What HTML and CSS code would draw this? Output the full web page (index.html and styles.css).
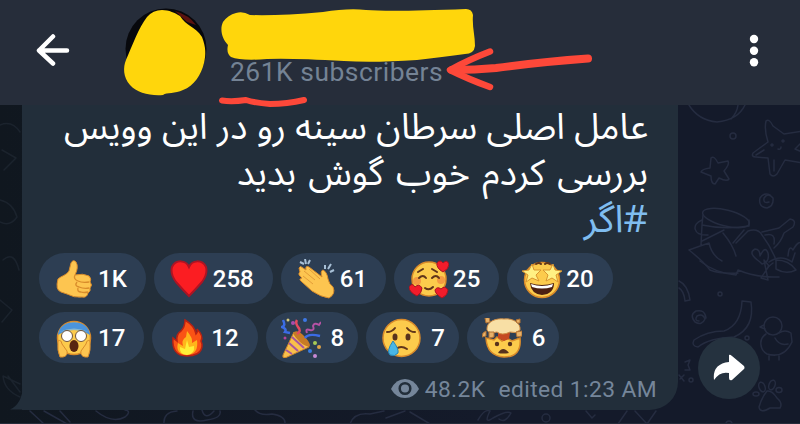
FILE: index.html
```html
<!DOCTYPE html>
<html lang="en">
<head>
    <meta charset="UTF-8">
    <meta name="viewport" content="width=device-width, initial-scale=1.0">
    <title>Channel</title>
    <link rel="stylesheet" href="styles.css">
</head>
<body>
    <div class="screen">
        <header class="topbar">
            <svg class="back" viewBox="0 0 34 32"><path d="M31 16.500H3M17 2.500L3 16.500L17 29.500"/></svg>
            <svg class="avatar" viewBox="0 0 86 92">
                <circle class="photo" cx="43" cy="42" r="40.500"/>
                <path class="photo-red" d="M52 4Q66 8 73 18L64 15Z"/>
                <path class="paint" d="M39 3C46 3 52 6 57 9C63 19 72 19 79 30C83 40 83 48 81 56C78 68 71 79 60 83C52 87 44 85 40 88C27 89 14 86 7 78C0 70 0 60 3 53C9 39 16 20 24 10Q30 3 39 3Z"/>
            </svg>
            <div class="channel">
                <svg class="name" viewBox="0 0 256 56">
                    <path class="paint" d="M15 5Q22 3 29 7Q57 8 102 4Q127 0 145 2Q170 4 245 1Q251 1 252 7C251 19 254 27 254 38Q253 46 244 46Q222 49 196 52Q151 55 123 53Q70 50 46 51Q20 53 10 49Q5 45 7 37C0 30-1 20 2 14Q7 7 15 5Z"/>
                </svg>
                <div class="subs">261K subscribers</div>
            </div>
            <svg class="more" viewBox="0 0 10 34"><circle cx="5" cy="5" r="4.200"/><circle cx="5" cy="16.700" r="4.200"/><circle cx="5" cy="28.300" r="4.200"/></svg>
        </header>

        <main class="chat">
            <svg class="doodles" viewBox="0 105 800 319">
                <!-- right side -->
                <path d="M689 105Q698 120 717 122Q738 120 745 105M738 105Q737 113 731 119"/>
                <circle cx="733" cy="136" r="3"/>
                <path d="M766 121Q769 118 773 126L784 134L803 131M766 121Q764 130 768 142L753 153Q751 157 756 157L768 158L770 174Q773 178 777 174L785 160L803 163M774 160V171M803 141L795 149L802 152M756 155L764 150M778 149Q781 150 781 147"/>
                <circle cx="772" cy="145" r="1"/><circle cx="783" cy="141" r="1"/>
                <path d="M711 158Q714 155 718 163L728 161Q730 164 724 171L729 179Q727 182 719 178L715 184Q711 184 711 176L701 172Q702 169 710 168Z"/>
                <path d="M769 202Q763 204 764 198Q768 192 773 198Q774 206 767 208Q758 207 760 198Q764 192 770 195"/>
                <ellipse cx="726" cy="218" rx="24" ry="8" transform="rotate(14 726 218)"/>
                <path d="M703 215L702 225Q725 230 749 226V220M702 220C691 224 693 236 708 235M702 225L701 245M724 230L702 241M744 230L733 243M689 250Q700 246 709 243Q712 256 722 261M723 233Q733 245 736 256M689 250Q704 262 710 270Q720 274 738 273M736 243L748 231Q758 228 762 235Q771 247 776 260M762 232L779 228L790 219Q797 220 793 227L784 233Q781 242 774 248M765 235Q776 232 774 244"/>
                <path d="M760 262Q747 253 755 249Q760 249 760 256Q765 245 768 253Q770 262 762 264ZM769 262Q781 254 792 262M773 263L768 267M788 256Q789 244 793 250Q799 239 803 244M795 253L792 262"/>
                <path d="M700 261Q715 273 736 275L738 270Q757 278 779 277M776 260Q789 260 796 270Q786 275 776 269ZM764 260L769 266L761 278L768 280Z"/>
                <path d="M679 281Q688 285 690 300L685 301Q684 291 679 288"/>
                <circle cx="720" cy="294" r="2"/><circle cx="747" cy="338" r="2"/>
                <path d="M699 321Q694 321 697 316Q703 313 705 319Q702 326 695 322Q689 315 696 311Q705 309 706 318"/>
                <path d="M742 301L751 302Q755 328 734 337Q709 338 698 347Q691 346 694 340Q707 331 724 331Q741 325 742 301Z"/>
                <circle cx="773" cy="326" r="9"/>
                <path d="M764 325L760 327L765 329M766 334C758 339 760 350 767 354Q784 359 792 342L791 333Q785 329 779 333M775 338Q779 346 788 344M769 356V360M779 356V360"/>
                <path d="M767 391Q772 390 777 398Q783 403 780 408L770 408Q760 414 759 407Q762 397 767 391Z"/>
                <ellipse cx="756" cy="394" rx="3" ry="2"/><ellipse cx="762" cy="387" rx="3" ry="5" transform="rotate(-20 762 387)"/><ellipse cx="772" cy="385" rx="3" ry="5" transform="rotate(20 772 385)"/><ellipse cx="779" cy="390" rx="3" ry="2.500"/>
                <path d="M685 362L690 360L688 365L690 370L685 370M679 375L684 381M684 375L680 379"/><circle cx="691" cy="380" r="2"/>
                <!-- left edge -->
                <g class="faint">
                    <path d="M0 125Q12 120 20 132M2 150L16 158L4 170M0 200Q13 203 17 217Q10 227 0 222M3 260Q14 250 19 270M0 300L12 310L2 322M3 376L20 384M3 376Q4 390 20 397M8 376L20 392"/>
                </g>
                <!-- under the bubble -->
                <path d="M30 411L44 424M44 411L67 424M60 411L70 422M96 411Q112 424 125 417Q132 411 125 410M164 424Q163 412 177 411M193 411Q190 424 207 420Q222 418 220 411M202 410Q205 421 214 411M255 410Q260 416 272 414Q286 416 285 424M350 424Q354 412 370 414L384 411M386 418L405 411M430 424L410 412M478 420Q485 408 490 411Q483 425 493 418Q507 410 511 413Q505 424 499 419M586 411L592 418L595 415M618 424L627 411M635 411L647 424L656 411"/>
                <circle cx="546" cy="418" r="4"/><circle cx="729" cy="424" r="3"/>
            </svg>

            <article class="bubble">
                <p class="message" dir="rtl" lang="fa">
                    <span class="line">عامل اصلی سرطان سینه رو در این وویس</span>
                    <span class="line loose">بررسی کردم خوب گوش بدید</span>
                    <span class="line hashtag">#اگر</span>
                </p>

                <div class="reactions">
                    <div class="row">
                        <div class="chip">
                            <svg viewBox="0 0 40 40"><path class="skin" d="M4 20C7 17 13 16 15 12L17 4Q19 0 22 3Q25 8 21 16Q29 14 35 17Q38 20 36 23Q39 26 36 29Q37 32 34 34Q33 39 28 38Q20 39 13 35L7 33Q1 31 4 20Z"/><path class="skin-line" d="M21 16Q19 20 24 22M24 22Q28 24 35 23M23 23Q20 27 25 28Q30 30 35 29M24 29Q23 33 27 33Q30 34 34 33"/></svg>
                            <span>1K</span>
                        </div>
                        <div class="chip">
                            <svg viewBox="0 0 40 40"><path d="M20 37Q14 31 7 23Q1 15 3 8C7 0 17 1 20 8C23 1 33 0 37 8Q39 15 33 23Q26 31 20 37Z" fill="#fb1d22" stroke="#ad1423" stroke-width="2"/></svg>
                            <span>258</span>
                        </div>
                        <div class="chip">
                            <svg viewBox="0 0 40 40"><path class="skin" d="M3 9Q4 6 7 9L10 11Q9 6 13 8L26 18Q24 12 27 11Q31 13 32 20Q33 25 37 28Q40 35 33 39Q25 38 16 32L6 23Q2 20 6 19Q1 15 4 13Z"/><path class="skin-line thin" d="M8 12L19 21M7 17L17 25M13 10L24 20"/><path d="M4 3L8 5M9 0L10 5M14 1L12 5M29 6L29 10M35 5L32 10M38 11L34 13" stroke="#a8c0d6" stroke-width="2" fill="none"/></svg>
                            <span>61</span>
                        </div>
                        <div class="chip">
                            <svg viewBox="0 0 40 40"><circle class="face" cx="20" cy="20" r="17"/><circle cx="8" cy="22" r="4" fill="#f49b42"/><circle cx="32" cy="21" r="4" fill="#f49b42"/><path class="feature" d="M9 13L14 10M23 10L28 13M10 19Q14 15 17 19M23 19Q27 15 30 19M16 29Q20 32 24 28"/><path class="heart" d="M34 13Q27 9 28 4Q31 0 34 4Q38 0 40 5Q40 10 34 13Z"/><path class="heart" d="M8 37Q0 33 0 28Q3 23 6 28Q10 24 13 29Q13 34 8 37Z"/><path class="heart" d="M33 39Q26 35 26 31Q28 27 32 30Q36 26 39 31Q39 36 33 39Z"/></svg>
                            <span>25</span>
                        </div>
                        <div class="chip">
                            <svg viewBox="0 0 40 40"><circle class="face" cx="20" cy="21" r="17.500"/><path d="M8 24Q20 28 32 24Q32 35 20 36Q9 35 8 24Z" fill="#4c2012"/><path d="M9 25Q20 29 31 25L30 28Q20 31 10 28Z" fill="#fff"/><path class="feature" d="M14 5Q17 3 19 5M23 5Q25 3 28 5"/><path class="star" d="M10 5L12 11L19 11L14 16L17 22L10 19L4 23L6 16L0 12L7 11Z"/><path class="star" d="M31 5L33 11L40 12L34 16L36 23L30 19L24 22L26 16L21 11L28 11Z"/></svg>
                            <span>20</span>
                        </div>
                    </div>
                    <div class="row">
                        <div class="chip">
                            <svg viewBox="0 0 40 40"><circle class="face" cx="20" cy="20" r="16.500"/><path d="M4 17C5 0 35 0 36 17Q20 7 4 17Z" fill="#4b94dc"/><path d="M5 14Q20 7 35 14Q20 10 5 14Z" fill="#8bb8cd"/><circle cx="13" cy="18" r="5.500" fill="#fff" stroke="#70553b"/><circle cx="27" cy="18" r="5.500" fill="#fff" stroke="#70553b"/><ellipse cx="20" cy="28" rx="4.500" ry="6" fill="#582511"/><path class="skin" d="M4 23Q7 21 8 26L13 33Q14 38 9 39H6Q3 33 4 23ZM36 23Q33 21 32 26L27 33Q26 38 31 39H34Q37 33 36 23Z"/></svg>
                            <span>17</span>
                        </div>
                        <div class="chip">
                            <svg viewBox="0 0 40 40"><path d="M18 2Q28 8 29 16Q31 14 30 11Q37 18 34 23L35 26C36 36 26 38 20 38C9 38 5 31 6 20L10 23Q9 16 14 13Q18 9 18 2Z" fill="#fa5315" stroke="#b82113" stroke-width="1.500"/><path d="M20 13Q26 20 25 25L30 22Q32 36 20 37Q8 36 11 25L16 28Q14 22 19 19Z" fill="#ffb51b"/><path d="M20 22L22 29L27 28Q28 36 20 37Q12 36 13 29L18 31Z" fill="#ffef38"/></svg>
                            <span>12</span>
                        </div>
                        <div class="chip single">
                            <svg viewBox="0 0 40 40"><path d="M13 14L28 29L4 40Q1 40 2 37Z" fill="#f9c04b" stroke="#c9812a"/><path d="M8 25L17 33M11 19L23 30M5 32L11 36" stroke="#a8569e" stroke-width="2"/><path d="M13 14Q17 11 24 19Q31 27 28 29Q21 27 17 22Q11 16 13 14Z" fill="#c77b26"/><path d="M2 2Q5 8 1 9Q6 11 4 14L9 15M24 20Q27 15 39 18" fill="none" stroke="#3b6ce6" stroke-width="2.500"/><path d="M16 16Q21 13 17 9Q14 5 16 2" fill="none" stroke="#e34a60" stroke-width="2.500"/><path d="M26 15Q24 10 29 12Q34 13 32 8Q33 4 38 7L40 4" fill="none" stroke="#b452a4" stroke-width="2"/><circle cx="7" cy="2" r="1.500" fill="#d6ca80"/><circle cx="12" cy="5" r="2" fill="#a94dac"/><circle cx="24" cy="2" r="2" fill="#3d78e6"/><circle cx="34" cy="25" r="2" fill="#a8ca55"/><circle cx="38" cy="29" r="2" fill="#dda249"/><circle cx="29" cy="33" r="2" fill="#397ce0"/><circle cx="34" cy="38" r="2" fill="#c789d5"/><circle cx="4" cy="20" r="1.500" fill="#b4459d"/></svg>
                            <span>8</span>
                        </div>
                        <div class="chip single">
                            <svg viewBox="0 0 40 40"><circle class="face" cx="20.500" cy="20" r="18.500"/><path class="feature" d="M6 14Q11 14 14 10M26 10Q29 14 34 14M15 31Q20 27 26 31"/><ellipse cx="14" cy="19" rx="2.500" ry="3.500" fill="#57321c"/><ellipse cx="27" cy="19" rx="2.500" ry="3.500" fill="#57321c"/><path d="M12 23Q18 31 17 35Q14 39 9 37Q5 33 12 23Z" fill="#49b6e5" stroke="#2686b7"/></svg>
                            <span>7</span>
                        </div>
                        <div class="chip single">
                            <svg viewBox="0 0 40 40"><path class="face" d="M4 20L12 22L15 19L20 23L25 20L30 23L38 20Q40 39 22 39Q5 38 4 20Z"/><path d="M16 15L28 15L27 21L22 23L16 20Z" fill="#c54a21"/><path class="cloud" d="M5 12C4 3 15 0 22 1C31 0 39 5 38 12Q34 16 28 14Q20 18 15 14Q7 16 5 12Z"/><path class="debris" d="M3 0L7 -1L8 4L4 5ZM34 2L38 1V5L35 5ZM1 15L4 13V18L0 19ZM7 14L12 14L12 19L7 20ZM34 14L40 13L40 18L35 19Z"/><circle cx="15" cy="26" r="2.200" fill="#57321c"/><circle cx="28" cy="26" r="2.200" fill="#57321c"/><path d="M16 35Q21 27 27 35Q21 36 16 35Z" fill="#57321c"/></svg>
                            <span>6</span>
                        </div>
                    </div>
                </div>

                <footer class="meta">
                    <svg class="eye" viewBox="0 0 28 20"><path d="M14 0Q23 0 28 10Q23 19 14 19Q5 19 0 10Q5 0 14 0Z" fill="#75869a"/><circle cx="14" cy="9.500" r="5.300" fill="#75869a" stroke="#222e3a" stroke-width="2.500"/></svg>
                    <span class="views">48.2K</span>
                    <span class="time">edited 1:23 AM</span>
                </footer>
                <svg class="tail" viewBox="0 0 13 24"><path d="M13 0Q12 18 0 23.500H13Z"/></svg>
            </article>

            <button class="share" aria-label="Share">
                <svg viewBox="0 0 32 28"><path d="M16 1Q17 0 19 2L31 12Q32 14 31 15L19 26Q16 27 16 24V19Q7 17 1 26Q-1 10 16 8Z"/></svg>
            </button>
        </main>

        <!-- red pen marks -->
        <svg class="marks" viewBox="0 0 800 424">
            <path d="M222 100.500Q232 102 246 100Q255 103 270 104Q287 104 304 100" stroke-width="6"/>
            <path d="M588 58.500Q540 62 496 68Q475 70 452 70" stroke-width="8"/>
            <path d="M490 51.500Q468 60 450 70Q468 79 490 87" stroke-width="6.500"/>
        </svg>
    </div>
</body>
</html>
```
FILE: styles.css
```css
* {
    box-sizing: border-box;
}
body {
    margin: 0;
    font-family: Roboto, sans-serif;
    background: #141a2a;
}
.screen {
    position: relative;
    width: 800px;
    height: 424px;
    overflow: hidden;
    display: flex;
    flex-direction: column;
}
.topbar {
    height: 105px;
    background: #262d3a;
    display: flex;
    align-items: flex-start;
}
.back {
    width: 34px;
    height: 32px;
    margin: 34px 0 0 36px;
    fill: none;
    stroke: #fff;
    stroke-width: 4.5;
    stroke-linecap: round;
    stroke-linejoin: round;
}
.avatar {
    width: 86px;
    height: 92px;
    margin: 7px 0 0 53px;
}
.photo {
    fill: #07080c;
}
.photo-red {
    fill: #5a120f;
}
.paint {
    fill: #ffd60c;
}
.channel {
    margin: 8px 0 0 12px;
    width: 256px;
}
.name {
    display: block;
    width: 256px;
    height: 56px;
}
.subs {
    margin: -7px 0 0 9px;
    font-size: 26.4px;
    letter-spacing: 0.53px;
    line-height: 30px;
    color: #748395;
    white-space: nowrap;
}
.more {
    width: 10px;
    height: 34px;
    margin: 34px 41px 0 auto;
    fill: #fff;
}
.chat {
    position: relative;
    flex: 1;
    display: flex;
    align-items: flex-start;
    background: linear-gradient(90deg, #10171f, #141a2a 60%);
    border-bottom: 1px solid #252d3b;
}
.doodles {
    position: absolute;
    left: 0;
    top: 0;
    width: 800px;
    height: 319px;
    fill: none;
    stroke: #252c40;
    stroke-width: 1.5;
    stroke-linecap: round;
    stroke-linejoin: round;
}
.faint {
    stroke: #1b232d;
}
.bubble {
    position: relative;
    width: 656px;
    height: 305px;
    margin-left: 22px;
    background: #222e3a;
    border-bottom-right-radius: 28px;
}
.message {
    margin: 0;
    height: 148px;
    padding: 0 30px;
    font-family: "Noto Sans Arabic", "DejaVu Sans", sans-serif;
    font-size: 36px;
    color: #fff;
}
.line {
    display: block;
    height: 46px;
    line-height: 46px;
    white-space: nowrap;
}
.loose {
    word-spacing: 3px;
}
.hashtag {
    font-size: 38px;
    color: #7fbdf0;
}
.reactions {
    display: flex;
    flex-direction: column;
    gap: 8px;
    padding-left: 17px;
}
.row {
    display: flex;
    gap: 8px;
}
.chip {
    display: flex;
    align-items: center;
    gap: 4px;
    height: 51px;
    padding: 0 19px 0 15px;
    border-radius: 26px;
    background: #2d3e53;
    color: #fff;
    font-size: 24px;
    font-weight: 500;
}
.chip.single {
    gap: 10px;
    padding-right: 14px;
}
.chip svg {
    width: 40px;
    height: 40px;
}
.skin {
    fill: #fdc550;
    stroke: #d98c2b;
    stroke-width: 1;
}
.skin-line {
    fill: none;
    stroke: #d98c2b;
    stroke-width: 1.3;
}
.skin-line.thin {
    stroke: #e39c38;
    stroke-width: 1;
}
.face {
    fill: #fccb4c;
    stroke: #d98a2a;
    stroke-width: 1.5;
}
.feature {
    fill: none;
    stroke: #60351a;
    stroke-width: 2;
    stroke-linecap: round;
}
.heart {
    fill: #f21c2b;
    stroke: #a81420;
}
.star {
    fill: #fff083;
    stroke: #d9952f;
}
.cloud {
    fill: #f8dfa5;
    stroke: #d18c42;
}
.debris {
    fill: #e8b269;
    stroke: #b37334;
}
.meta {
    display: flex;
    align-items: center;
    height: 30px;
    margin: 11px 21px 0 0;
    justify-content: flex-end;
    font-size: 22.8px;
    letter-spacing: 0.4px;
    color: #75869a;
}
.eye {
    width: 28px;
    height: 20px;
    margin-right: 6px;
}
.views {
    margin-right: 13px;
}
.tail {
    position: absolute;
    left: -12px;
    bottom: 0;
    width: 13px;
    height: 24px;
    fill: #222e3a;
}
.share {
    position: relative;
    display: flex;
    justify-content: center;
    align-items: center;
    width: 62px;
    height: 62px;
    margin: 232px 0 0 20px;
    padding: 0;
    border: none;
    border-radius: 50%;
    background: #25323f;
}
.share svg {
    width: 32px;
    height: 28px;
    fill: #fff;
}
.marks {
    position: absolute;
    left: 0;
    top: 0;
    width: 800px;
    height: 424px;
    fill: none;
    stroke: #fd4839;
    stroke-linecap: round;
    stroke-linejoin: round;
    pointer-events: none;
}
```
